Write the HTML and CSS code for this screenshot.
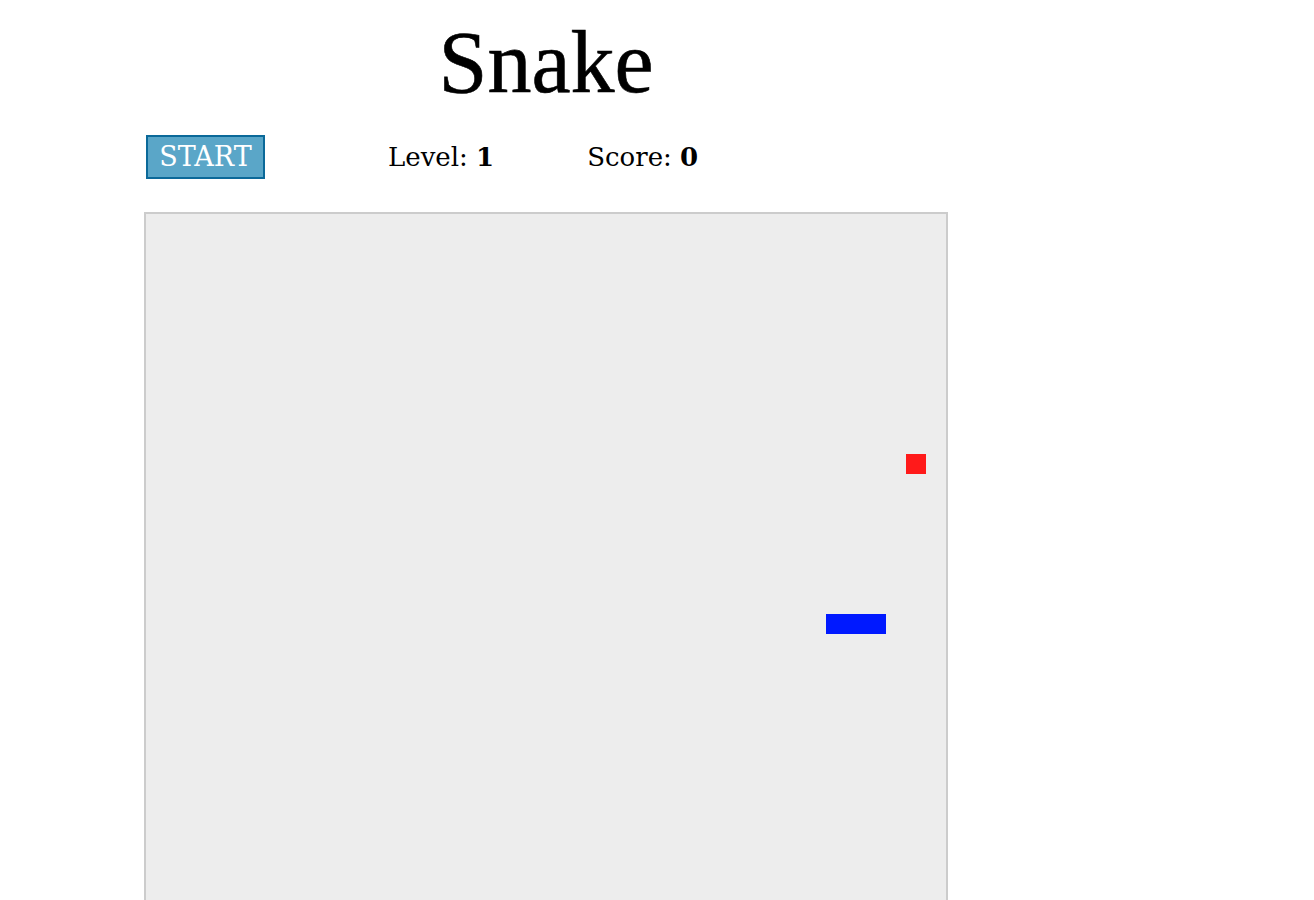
FILE: index.html
```html
<!DOCTYPE html>
<html>
<head>
<meta charset="utf-8">
<title>Snake</title>
<link rel="stylesheet" href="styles.css">
</head>
<body>
<div class="game">
  <h1 class="title">Snake</h1>
  <div class="controls">
    <button class="start">START</button>
    <div class="stat stat-level">Level: <b>1</b></div>
    <div class="stat stat-score">Score: <b>0</b></div>
  </div>
  <div class="board">
    <div class="food" style="left:760px;top:240px"></div>
    <div class="snake" style="left:680px;top:400px;width:60px"></div>
  </div>
</div>
</body>
</html>
```
FILE: styles.css
```css
html, body {
  margin: 0;
  padding: 0;
  background: #fff;
}
body {
  font-family: "DejaVu Serif", "Liberation Serif", serif;
  color: #000;
}
.game {
  margin-left: 144px;
  width: 804px;
}
.title {
  margin: 0;
  padding-top: 13px;
  font-family: "Liberation Serif", serif;
  font-weight: normal;
  font-size: 88px;
  line-height: 100px;
  text-align: center;
  -webkit-text-stroke: 0.6px #000;
}
.controls {
  display: flex;
  align-items: baseline;
  margin-top: 22px;
  padding-left: 2px;
  height: 44px;
}
.start {
  box-sizing: border-box;
  width: 119px;
  height: 44px;
  padding: 0;
  border: 2px solid #0b6999;
  background: #5aa6c8;
  color: #fff;
  font-family: "DejaVu Serif", serif;
  font-size: 27px;
  line-height: 40px;
  border-radius: 0;
}
.stat {
  font-size: 26px;
}
.stat b {
  font-weight: bold;
}
.stat-level {
  margin-left: 123px;
}
.stat-score {
  margin-left: 93px;
}
.board {
  position: relative;
  margin-top: 33px;
  width: 800px;
  height: 800px;
  border: 2px solid #cccccc;
  background: #ededed;
}
.food {
  position: absolute;
  width: 20px;
  height: 20px;
  background: #ff1a1a;
}
.snake {
  position: absolute;
  height: 20px;
  background: #0019ff;
}
```
